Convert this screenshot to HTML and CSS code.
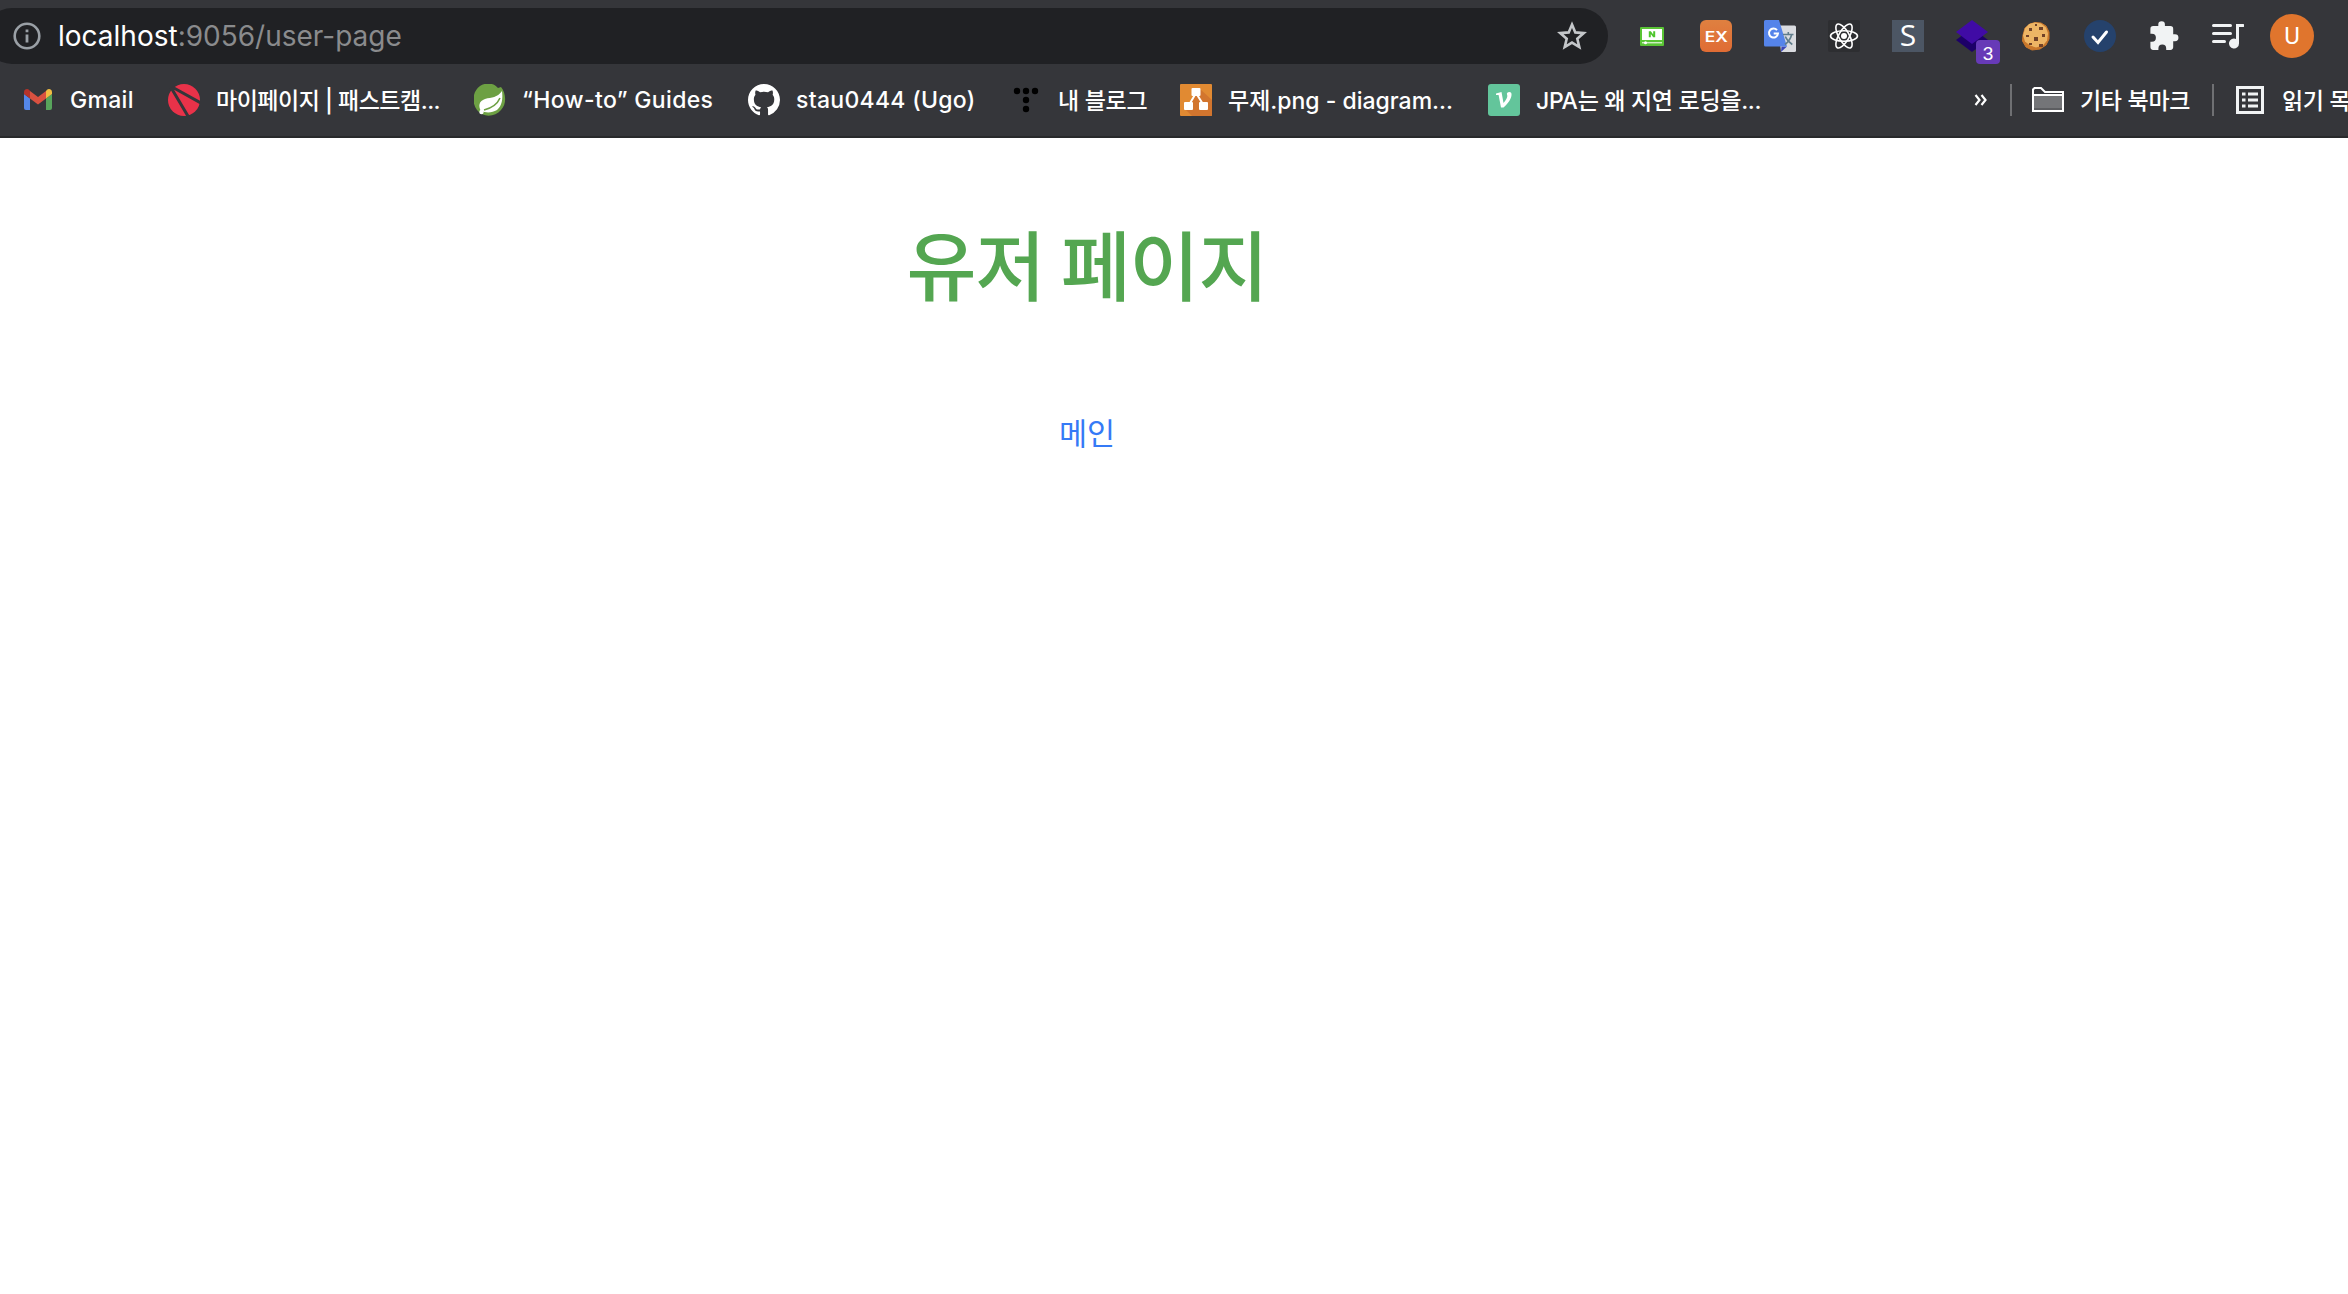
FILE: index.html
```html
<!DOCTYPE html>
<html lang="ko">
<head>
    <meta charset="UTF-8">
    <title>유저 페이지</title>
    <link rel="stylesheet" href="styles.css">
</head>
<body>
    <header class="browser">
        <div class="toolbar">
            <div class="address-bar">
                <svg class="info-icon" viewBox="0 0 28 28"><circle cx="14" cy="14" r="12.3" fill="none" stroke="#9aa0a6" stroke-width="2.6"/><path d="M12.6 7.4h2.8v2.8h-2.8zM12.6 12.6h2.8v8h-2.8z" fill="#9aa0a6"/></svg>
                <div class="url"><span class="host">localhost</span><span class="path">:9056/user-page</span></div>
                <svg class="star" viewBox="0 0 32 32"><path d="M16 4.5l3.3 7.9 8.5.7-6.5 5.6 2 8.4-7.3-4.5-7.3 4.5 2-8.4-6.5-5.6 8.5-.7z" fill="none" stroke="#c4c7ca" stroke-width="2.6"/></svg>
            </div>
            <div class="extensions">
                <svg viewBox="0 0 32 32"><rect x="4" y="7" width="24" height="19" rx="1" fill="#5ac435"/><path d="M6 9h20v11H6z" fill="#fff"/><path d="M12.8 17.3v-6.1h2.1l2.3 3.2v-3.2h2v6.1h-2l-2.4-3.3v3.3z" fill="#4ec62c"/><path d="M6 22.8h20" stroke="#fff" stroke-width="1"/><circle cx="9.5" cy="22.8" r="1.5" fill="#fff"/></svg>
                <span class="ext ext-ex"><b>EX</b></span>
                <svg viewBox="0 0 32 32"><path d="M14 5.5h16.5A1.5 1.5 0 0 1 32 7v23.500a1.500 1.500 0 0 1-1.500 1.500H17z" fill="#dadce0"/><path d="M17.500 26.500h5.500L17 32z" fill="#3a45b5"/><path d="M1.500 0H15l8 26.500H1.500A1.500 1.500 0 0 1 0 25V1.500A1.500 1.500 0 0 1 1.500 0z" fill="#5584ea"/><path d="M13 10.200a4.500 4.500 0 1 0 1 3.300H9.700" fill="none" stroke="#fff" stroke-width="2"/><path d="M19 14.500h10.500M24.300 12v2.500M27.700 14.500c-1 4-3.500 7.500-6.700 10M21.300 16.500c1.300 3.200 4 6 7 8" fill="none" stroke="#607d8b" stroke-width="1.600"/></svg>
                <svg viewBox="0 0 32 32"><rect width="32" height="32" rx="2" fill="#2d2e31"/><g fill="none" stroke="#fff" stroke-width="1.600"><ellipse cx="16" cy="16" rx="13.500" ry="5.200"/><ellipse cx="16" cy="16" rx="13.500" ry="5.200" transform="rotate(60 16 16)"/><ellipse cx="16" cy="16" rx="13.500" ry="5.200" transform="rotate(120 16 16)"/></g><circle cx="16" cy="16" r="3" fill="#fff"/></svg>
                <span class="ext ext-s">S</span>
                <span class="ext ext-layers">
                    <svg viewBox="0 0 32 32"><path d="M0 20L16 8l16 12-16 12z" fill="#1d0068"/><path d="M0 12L16 0l16 12-16 12z" fill="#400ba5"/></svg>
                    <span class="count">3</span>
                </span>
                <svg viewBox="0 0 32 32"><path d="M10 4l5-1.500 6 .5 5 3 3 6v7l-3 6-6 4-8 1-6-3-3.500-6L3 15l2-7z" fill="#c9782c" stroke="#c9782c" stroke-linejoin="round"/><path d="M9 4l6-1.500 6 1 5 4 2 6-1 7-4 5-7 2-6-2-5-4-2-6 2-7z" fill="#edb565"/><path d="M9 8h3v3H9zM19 7h4v3h-4zM14 17h4v4h-4zM6 15h3v2H6zM22 14h3v3h-3zM9 23h3v2H9zM19 24h4v3h-4zM15 4h2v2h-2z" fill="#704128"/></svg>
                <svg viewBox="0 0 32 32"><circle cx="16" cy="16" r="16" fill="#25426c"/><path d="M9 17l5 5.500 8.500-10.500" fill="none" stroke="#fff" stroke-width="3" stroke-linecap="round"/></svg>
                <svg viewBox="0 0 32 32"><path d="M27 14.300h-1.800V8.900a2.800 2.800 0 0 0-2.800-2.800h-5.500V4.600a3.300 3.300 0 0 0-6.600 0v1.500H5.200a2.800 2.800 0 0 0-2.800 2.800v4.900h1.500a4 4 0 0 1 0 8H2.400v5.300a2.800 2.800 0 0 0 2.800 2.800h5.200v-1.500a3.900 3.900 0 0 1 7.800 0v1.500h4.200a2.800 2.800 0 0 0 2.800-2.800v-5.900H27a3.450 3.450 0 0 0 0-6.900z" fill="#f1f3f4"/></svg>
                <svg viewBox="0 0 32 32"><path d="M1.500 5.500h17M1.500 13.500h17M1.500 21.500h11" stroke="#f1f3f4" stroke-width="3" stroke-linecap="round"/><path d="M24 4h7a1.500 1.500 0 0 1 0 3h-4v16.500a5 5 0 1 1-3-4.600z" fill="#f1f3f4"/></svg>
                <span class="avatar">U</span>
            </div>
        </div>
        <nav class="bookmarks">
            <a class="bookmark gmail">
                <svg viewBox="0 0 32 32"><path d="M2 10l6 4.500V26H4a2 2 0 0 1-2-2z" fill="#5487e8"/><path d="M24 14.500l6-4.500v14a2 2 0 0 1-2 2h-4z" fill="#58a55c"/><path d="M8 7l8 6 8-6v7.500l-8 6-8-6z" fill="#d95140"/><path d="M2 8a3 3 0 0 1 5-2.200L8 7v7.500L2 10z" fill="#b5332a"/><path d="M30 8a3 3 0 0 0-5-2.200L24 7v7.500l6-4.500z" fill="#f2bd42"/></svg>
                <span>Gmail</span>
            </a>
            <a class="bookmark campus">
                <svg viewBox="0 0 32 32"><circle cx="16" cy="16" r="16" fill="#e93249"/><path d="M3 3.500L20.500 33M5 3.500L33 19" stroke="#35363a" stroke-width="3"/></svg>
                <span>마이페이지 | 패스트캠...</span>
            </a>
            <a class="bookmark guides">
                <svg viewBox="0 0 32 32"><path d="M27 3c5 6 6 17 0 23-6 7-18 8-24 0S-1 7 6 2c6-4 14-3 18 2z" fill="#6da043"/><path d="M28 7c1 8 0 15-5 19-5 3-11 3-16 1-3-5-2-10 4-12 7-2 12-1 17-8z" fill="#fff"/><path d="M10 26c8-2 13-5 16-12" fill="none" stroke="#6da043" stroke-width="1.600"/><circle cx="7.500" cy="28" r="2.200" fill="#fff"/></svg>
                <span>“How-to” Guides</span>
            </a>
            <a class="bookmark github">
                <svg viewBox="0 0 16 16"><path d="M8 0C3.580 0 0 3.580 0 8c0 3.540 2.290 6.530 5.470 7.590.4.070.55-.17.55-.38v-1.490c-2.010.37-2.530-.49-2.690-.94-.09-.23-.48-.94-.82-1.130-.28-.15-.68-.52-.01-.53.63-.01 1.080.58 1.230.82.72 1.210 1.870.87 2.330.66.07-.52.28-.87.51-1.070-1.780-.2-3.640-.89-3.640-3.950 0-.87.31-1.590.82-2.150-.08-.2-.36-1.020.08-2.120 0 0 .67-.21 2.200.82a7.600 7.600 0 0 1 4 0c1.530-1.040 2.200-.82 2.200-.82.44 1.100.16 1.920.08 2.120.51.56.82 1.270.82 2.150 0 3.070-1.870 3.750-3.650 3.950.29.25.54.73.54 1.480v2.200c0 .21.15.46.55.38A8 8 0 0 0 16 8c0-4.420-3.580-8-8-8z" fill="#fff"/></svg>
                <span>stau0444 (Ugo)</span>
            </a>
            <a class="bookmark blog">
                <svg viewBox="0 0 32 32"><circle cx="7" cy="7" r="3.200"/><circle cx="16" cy="7" r="3.200"/><circle cx="25" cy="7" r="3.200"/><circle cx="16" cy="16" r="3.200"/><circle cx="16" cy="25" r="3.200"/></svg>
                <span>내 블로그</span>
            </a>
            <a class="bookmark diagram">
                <svg viewBox="0 0 32 32"><rect width="32" height="32" rx="1" fill="#e18a32"/><path d="M20 5l12 11v15a1 1 0 0 1-1 1H12l-7-7z" fill="#d2752e"/><path d="M16 9L9 21M16 9l7.500 12" stroke="#fff" stroke-width="2"/><rect x="11.500" y="4" width="9" height="8" rx="1" fill="#fff"/><rect x="4" y="18" width="9" height="8" rx="1" fill="#fff"/><rect x="19" y="18" width="9" height="8" rx="1" fill="#fff"/></svg>
                <span>무제.png - diagram...</span>
            </a>
            <a class="bookmark jpa">
                <svg viewBox="0 0 32 32"><rect width="32" height="32" rx="3" fill="#63c59b"/><path d="M8 9.500l5.500-1.500 2 11c3-3.500 4.500-6.500 3.500-8.500-.5-1.500.7-2.500 2.300-2.500 3.500 0 2.500 5 0 9-2 3-4 5-5.800 6.500H13l-2.400-12.500L8 11z" fill="#fff"/></svg>
                <span>JPA는 왜 지연 로딩을...</span>
            </a>
            <div class="bookmarks-end">
                <svg class="more" viewBox="0 0 14 14"><path d="M1.500 2l4 5-4 5M7.500 2l4 5-4 5" fill="none" stroke="#fff" stroke-width="2.200"/></svg>
                <i class="divider"></i>
                <a class="bookmark others">
                    <svg viewBox="0 0 32 32"><path d="M1 10h30v17H1z" fill="#747578"/><path d="M1 24h30v3H1z" fill="#5c5d60"/><path d="M1 27V5.500L2.500 4H9l4 4h18v19zM1 11h30" fill="none" stroke="#fff" stroke-width="2"/></svg>
                    <span>기타 북마크</span>
                </a>
                <i class="divider"></i>
                <a class="bookmark reading">
                    <svg viewBox="0 0 32 32"><rect x="3.500" y="3.500" width="25" height="25" fill="none" stroke="#f1f3f4" stroke-width="3"/><path d="M8 10h3.500M8 16h3.500M8 22h3.500M14 10h10M14 16h10M14 22h10" stroke="#f1f3f4" stroke-width="2.800"/></svg>
                    <span>읽기 목록</span>
                </a>
            </div>
        </nav>
    </header>
    <main class="container">
        <h1>유저 페이지</h1>
        <a class="main-link">메인</a>
    </main>
</body>
</html>
```
FILE: styles.css
```css
* {
    box-sizing: border-box;
}
body {
    margin: 0;
    background-color: #fff;
    font-family: Inter, "Noto Sans CJK KR", sans-serif;
    overflow: hidden;
}
.browser {
    height: 138px;
    background-color: #35363a;
    border-bottom: 2px solid #28292b;
    color: #fff;
}
.toolbar {
    display: flex;
    height: 72px;
    align-items: center;
}
.address-bar {
    display: flex;
    align-items: center;
    width: 1624px;
    height: 56px;
    margin-left: -16px;
    padding: 0 20px 0 29px;
    border-radius: 28px;
    background-color: #202124;
    flex-shrink: 0;
}
.info-icon {
    width: 28px;
    height: 28px;
}
.url {
    flex: 1;
    margin-left: 17px;
    font-size: 28px;
    white-space: nowrap;
}
.path {
    color: #8a8b8d;
}
.star {
    width: 32px;
    height: 32px;
}
.extensions {
    display: flex;
    align-items: center;
    gap: 32px;
    margin-left: 28px;
}
.extensions svg,
.ext {
    width: 32px;
    height: 32px;
    flex-shrink: 0;
}
.ext {
    display: flex;
    align-items: center;
    justify-content: center;
}
.ext-ex {
    border-radius: 6px;
    background: linear-gradient(#df8040, #e06c34);
    font-size: 14px;
}
.ext-ex b {
    font-weight: 600;
    transform: scaleX(1.25);
}
.ext-s {
    background-color: #4c5664;
    font-family: "Open Sans", sans-serif;
    font-size: 30px;
    line-height: 30px;
    padding-bottom: 2px;
}
.ext-layers {
    position: relative;
}
.count {
    position: absolute;
    left: 20px;
    top: 20px;
    width: 24px;
    height: 24px;
    border-radius: 4px;
    background-color: #673ab7;
    font: 500 19px/28px "Liberation Sans", sans-serif;
    text-align: center;
}
.avatar {
    width: 44px;
    height: 44px;
    margin-left: -6px;
    border-radius: 50%;
    background-color: #e0752d;
    font: 24px/44px Roboto, sans-serif;
    text-align: center;
    flex-shrink: 0;
}
.bookmarks {
    display: flex;
    align-items: center;
    height: 56px;
    padding-left: 22px;
    font-size: 23px;
    font-weight: 500;
    white-space: nowrap;
}
.bookmark {
    display: flex;
    align-items: center;
    gap: 16px;
    flex-shrink: 0;
}
.bookmark svg {
    width: 32px;
    height: 32px;
    flex-shrink: 0;
}
.bookmark span {
    padding-bottom: 3px;
}
.gmail {
    width: 146px;
}
.campus {
    width: 306px;
    letter-spacing: -0.5px;
}
.guides {
    width: 274px;
    letter-spacing: 0.35px;
}
.github {
    width: 262px;
    letter-spacing: 0.3px;
}
.gmail span,
.guides span,
.github span {
    padding-bottom: 0;
}
.gmail {
    letter-spacing: 0.3px;
}
.blog {
    width: 170px;
    letter-spacing: -0.3px;
}
.diagram {
    width: 308px;
}
.jpa {
    width: 486px;
    letter-spacing: -0.3px;
}
.bookmarks-end {
    display: flex;
    align-items: center;
    letter-spacing: -0.3px;
}
.more {
    width: 14px;
    height: 14px;
    margin-right: 22px;
}
.divider {
    width: 2px;
    height: 32px;
    background-color: #6f7073;
}
.others {
    width: 180px;
    margin-left: 20px;
}
.reading {
    margin-left: 20px;
}
.container {
    display: flex;
    flex-direction: column;
    align-items: center;
    width: 2174px;
    padding-top: 73px;
}
h1 {
    margin: 0;
    color: #54a651;
    font-size: 76px;
    font-weight: 500;
    line-height: 112px;
    letter-spacing: -1px;
    word-spacing: -3px;
}
.main-link {
    margin-top: 87px;
    color: #357af6;
    font-size: 30.5px;
    line-height: 48px;
}
```
